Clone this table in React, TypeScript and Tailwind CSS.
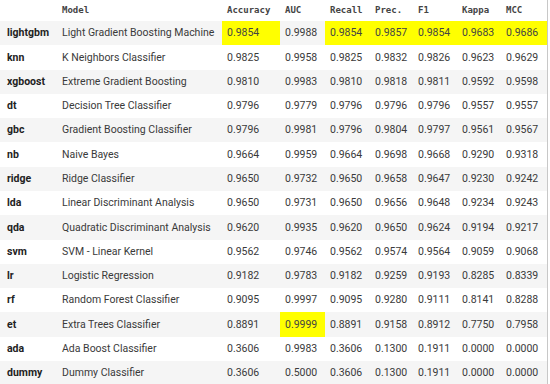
const cols = ['', 'Model', 'Accuracy', 'AUC', 'Recall', 'Prec.', 'F1', 'Kappa', 'MCC'];

type Row = { id: string; model: string; vals: string[]; hi: number[] };

const rows: Row[] = [
  { id: 'lightgbm', model: 'Light Gradient Boosting Machine', vals: ['0.9854', '0.9988', '0.9854', '0.9857', '0.9854', '0.9683', '0.9686'], hi: [0, 2, 3, 4, 5, 6] },
  { id: 'knn', model: 'K Neighbors Classifier', vals: ['0.9825', '0.9958', '0.9825', '0.9832', '0.9826', '0.9623', '0.9629'], hi: [] },
  { id: 'xgboost', model: 'Extreme Gradient Boosting', vals: ['0.9810', '0.9983', '0.9810', '0.9818', '0.9811', '0.9592', '0.9598'], hi: [] },
  { id: 'dt', model: 'Decision Tree Classifier', vals: ['0.9796', '0.9779', '0.9796', '0.9796', '0.9796', '0.9557', '0.9557'], hi: [] },
  { id: 'gbc', model: 'Gradient Boosting Classifier', vals: ['0.9796', '0.9981', '0.9796', '0.9804', '0.9797', '0.9561', '0.9567'], hi: [] },
  { id: 'nb', model: 'Naive Bayes', vals: ['0.9664', '0.9959', '0.9664', '0.9698', '0.9668', '0.9290', '0.9318'], hi: [] },
  { id: 'ridge', model: 'Ridge Classifier', vals: ['0.9650', '0.9732', '0.9650', '0.9658', '0.9647', '0.9230', '0.9242'], hi: [] },
  { id: 'lda', model: 'Linear Discriminant Analysis', vals: ['0.9650', '0.9731', '0.9650', '0.9656', '0.9648', '0.9234', '0.9243'], hi: [] },
  { id: 'qda', model: 'Quadratic Discriminant Analysis', vals: ['0.9620', '0.9935', '0.9620', '0.9650', '0.9624', '0.9194', '0.9217'], hi: [] },
  { id: 'svm', model: 'SVM - Linear Kernel', vals: ['0.9562', '0.9746', '0.9562', '0.9574', '0.9564', '0.9059', '0.9068'], hi: [] },
  { id: 'lr', model: 'Logistic Regression', vals: ['0.9182', '0.9783', '0.9182', '0.9259', '0.9193', '0.8285', '0.8339'], hi: [] },
  { id: 'rf', model: 'Random Forest Classifier', vals: ['0.9095', '0.9997', '0.9095', '0.9280', '0.9111', '0.8141', '0.8288'], hi: [] },
  { id: 'et', model: 'Extra Trees Classifier', vals: ['0.8891', '0.9999', '0.8891', '0.9158', '0.8912', '0.7750', '0.7958'], hi: [1] },
  { id: 'ada', model: 'Ada Boost Classifier', vals: ['0.3606', '0.9983', '0.3606', '0.1300', '0.1911', '0.0000', '0.0000'], hi: [] },
  { id: 'dummy', model: 'Dummy Classifier', vals: ['0.3606', '0.5000', '0.3606', '0.1300', '0.1911', '0.0000', '0.0000'], hi: [] },
];

const grid = 'grid grid-cols-[57px_165px_58px_45px_45px_43px_44px_44px_46px]';

export default function App() {
  return (
    <div className="h-[384px] w-[550px] overflow-hidden bg-white">
      <div className="w-[548px] border-r border-[#c8c8c8] font-['Roboto',sans-serif] text-[10.5px] text-[#3a3a3a]">
        <div className={`${grid} h-[21px] items-center font-['DejaVu_Sans_Mono',monospace] text-[9px] font-bold text-[#444]`}>
          {cols.map((c, i) => (
            <div key={i} className="pl-[5px]">
              {c}
            </div>
          ))}
        </div>
        {rows.map((r, ri) => (
          <div key={r.id} className={`${grid} h-[24.29px] ${ri % 2 === 0 ? 'bg-[#f5f5f5]' : 'bg-white'}`}>
            <div className="flex items-center pl-[7px] font-bold text-[#222]">{r.id}</div>
            <div className="flex items-center whitespace-nowrap pl-[5px]">{r.model}</div>
            {r.vals.map((v, vi) => (
              <div
                key={vi}
                className={`flex items-center pl-[5px] ${r.hi.includes(vi) ? 'bg-[#ffff00] text-[#444]' : ''}`}
              >
                {v}
              </div>
            ))}
          </div>
        ))}
      </div>
    </div>
  );
}
